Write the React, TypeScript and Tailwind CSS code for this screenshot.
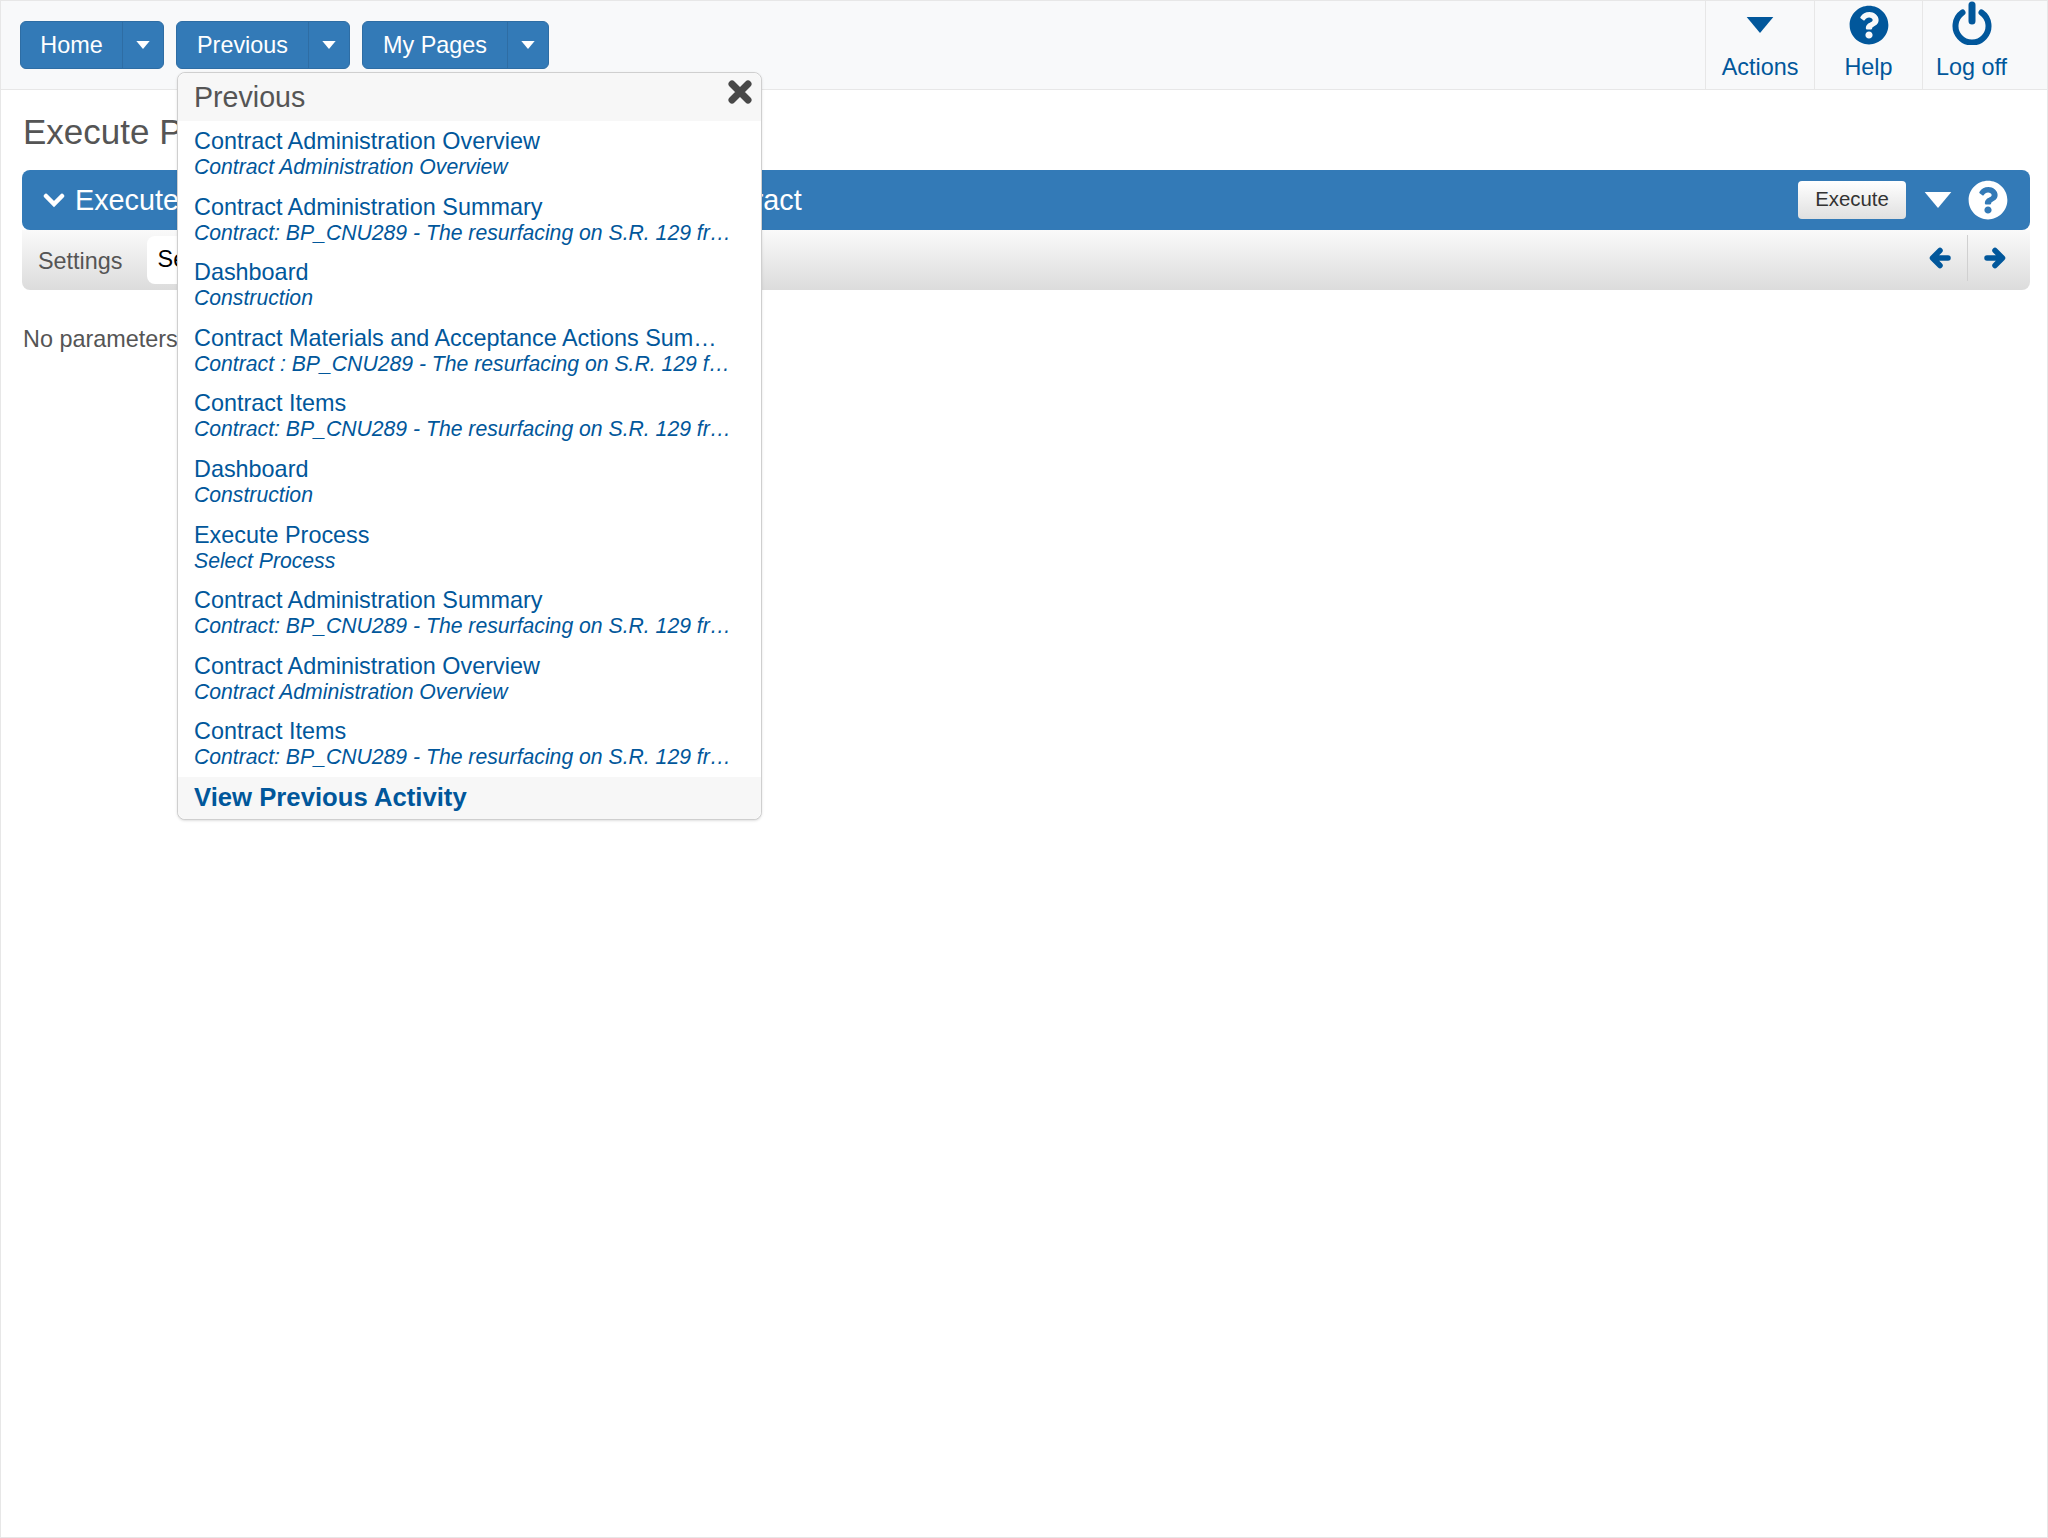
import { FaQuestionCircle } from 'react-icons/fa'

const previousItems = [
    { title: 'Contract Administration Overview', detail: 'Contract Administration Overview' },
    { title: 'Contract Administration Summary', detail: 'Contract: BP_CNU289 - The resurfacing on S.R. 129 from the Suwannee River' },
    { title: 'Dashboard', detail: 'Construction' },
    { title: 'Contract Materials and Acceptance Actions Summary', detail: 'Contract : BP_CNU289 - The resurfacing on S.R. 129 from the Suwannee River' },
    { title: 'Contract Items', detail: 'Contract: BP_CNU289 - The resurfacing on S.R. 129 from the Suwannee River' },
    { title: 'Dashboard', detail: 'Construction' },
    { title: 'Execute Process', detail: 'Select Process' },
    { title: 'Contract Administration Summary', detail: 'Contract: BP_CNU289 - The resurfacing on S.R. 129 from the Suwannee River' },
    { title: 'Contract Administration Overview', detail: 'Contract Administration Overview' },
    { title: 'Contract Items', detail: 'Contract: BP_CNU289 - The resurfacing on S.R. 129 from the Suwannee River' },
]

function Caret({ className }: { className: string }) {
    return (
        <svg className={className} viewBox="0 0 10 6" aria-hidden="true">
            <path d="M0 0H10L5 6Z" fill="currentColor" />
        </svg>
    )
}

function PowerIcon() {
    return (
        <svg className="w-[40px] h-[44px] text-[#01579b]" viewBox="0 0 40 44" aria-hidden="true">
            <path d="M10.5 11.5A16.5 16.5 0 1 0 29.5 11.5" fill="none" stroke="currentColor" strokeWidth="6" strokeLinecap="round" />
            <path d="M20 4V20" fill="none" stroke="currentColor" strokeWidth="7" strokeLinecap="round" />
        </svg>
    )
}

function CloseIcon() {
    return (
        <svg className="absolute right-[9px] top-[7px] w-[24px] h-[24px] text-[#484848]" viewBox="0 0 24 24" aria-hidden="true">
            <path d="M4 4L20 20M20 4L4 20" fill="none" stroke="currentColor" strokeWidth="7" strokeLinecap="round" />
        </svg>
    )
}

function ChevronIcon() {
    return (
        <svg className="w-[22px] h-[15px] mr-[10px]" viewBox="0 0 22 15" aria-hidden="true">
            <path d="M3 3L11 11L19 3" fill="none" stroke="currentColor" strokeWidth="4.5" strokeLinecap="round" />
        </svg>
    )
}

function ArrowLeft() {
    return (
        <svg className="w-[22px] h-[22px]" viewBox="0 0 22 22" aria-hidden="true">
            <path d="M19 11H4M11 3.5L3.5 11L11 18.5" fill="none" stroke="currentColor" strokeWidth="5.5" strokeLinecap="round" strokeLinejoin="round" />
        </svg>
    )
}

function ArrowRight() {
    return (
        <svg className="w-[22px] h-[22px]" viewBox="0 0 22 22" aria-hidden="true">
            <path d="M3 11H18M11 3.5L18.5 11L11 18.5" fill="none" stroke="currentColor" strokeWidth="5.5" strokeLinecap="round" strokeLinejoin="round" />
        </svg>
    )
}

function SplitButton({ label, labelWidth }: { label: string, labelWidth: string }) {
    return (
        <div className="flex h-[48px] rounded-[6px] bg-[#337ab7] border border-[#2e6da4] text-white text-[23.4px]">
            <span className={`flex items-center justify-center pt-[1px] border-r border-[#2e6da4] ${labelWidth}`}>{label}</span>
            <span className="flex items-center justify-center w-[40px]">
                <Caret className="w-[14px] h-[8px]" />
            </span>
        </div>
    )
}

function TopAction({ label, icon, width }: { label: string, icon: React.ReactNode, width: string }) {
    return (
        <div className={`flex flex-col items-center h-full border-l border-[#e7e7e7] text-[#01579b] text-[23.4px] ${width}`}>
            <div className="flex items-end justify-center h-[44px]">{icon}</div>
            <span className="mt-[10px] leading-[25px]">{label}</span>
        </div>
    )
}

function PreviousMenu() {
    return (
        <div className="absolute left-[176px] top-[72px] z-10 w-[585px] flex flex-col rounded-[8px] border border-[#cfcfcf] bg-white shadow-sm">
            <div className="relative h-[48px] shrink-0 rounded-t-[8px] bg-[#f7f7f7] pl-[16px] text-[28.6px] leading-[49px] text-[#555]">
                Previous
                <CloseIcon />
            </div>
            <ul className="h-[656px] pt-[7px] pl-[16px] pr-[26px]">
                {previousItems.map((item, index) => (
                    <li key={index} className="h-[65.6px] text-[#01579b]">
                        <div className="truncate text-[23.4px] leading-[27px]">{item.title}</div>
                        <div className="truncate text-[21.2px] leading-[24px] italic">{item.detail}</div>
                    </li>
                ))}
            </ul>
            <div className="h-[42px] shrink-0 rounded-b-[8px] bg-[#f7f7f7] pl-[16px] text-[25.7px] leading-[40px] font-bold text-[#01579b]">
                View Previous Activity
            </div>
        </div>
    )
}

export default function App() {
    return (
        <div className="relative min-h-[1538px] border-x border-b border-[#e7e7e7] bg-white font-['Liberation_Sans',Arial,sans-serif] text-[#555]">
            {/* Top navigation */}
            <div className="flex items-start justify-between h-[90px] pl-[19px] pr-[27px] bg-[#f8f9fa] border-y border-[#e7e7e7]">
                <div className="flex gap-x-[12px] pt-[20px]">
                    <SplitButton label="Home" labelWidth="w-[102px]" />
                    <SplitButton label="Previous" labelWidth="w-[132px]" />
                    <SplitButton label="My Pages" labelWidth="w-[145px]" />
                </div>
                <div className="flex h-full">
                    <TopAction label="Actions" width="w-[109px]" icon={<Caret className="w-[28px] h-[16px] mb-[12px] text-[#01579b]" />} />
                    <TopAction label="Help" width="w-[108px]" icon={<FaQuestionCircle className="w-[40px] h-[40px] text-[#01579b]" />} />
                    <TopAction label="Log off" width="w-[98px]" icon={<PowerIcon />} />
                </div>
            </div>

            <PreviousMenu />

            {/* Page content */}
            <div className="pl-[21px] pr-[17px]">
                <h1 className="pt-[20px] pl-[1px] h-[80px] text-[35px] leading-[44px] text-[#555]">Execute Process</h1>

                <div className="flex items-center justify-between h-[60px] rounded-[8px] bg-[#337ab7] pl-[21px] pr-[22px] text-white">
                    <div className="flex items-center">
                        <ChevronIcon />
                        <span className="text-[28.8px] pt-[1px]">Execute Process: Select a Process for Selected Contract</span>
                    </div>
                    <div className="flex items-center">
                        <button type="button" className="h-[38px] w-[108px] rounded-[4px] bg-gradient-to-b from-white to-[#e0e0e0] pb-[2px] text-[20.4px] text-[#333]">Execute</button>
                        <Caret className="w-[28px] h-[16px] ml-[18px] mr-[16px]" />
                        <FaQuestionCircle className="w-[40px] h-[40px]" />
                    </div>
                </div>

                <div className="flex items-center justify-between h-[60px] rounded-b-[8px] bg-gradient-to-b from-[#fafafa] to-[#dcdcdc] pl-[16px] pr-[24px]">
                    <div className="flex items-center">
                        <span className="text-[23.4px] mr-[24px] pt-[3px]">Settings</span>
                        <div className="h-[48px] w-[300px] rounded-[8px] bg-white pl-[11px] text-[23.4px] leading-[46px] text-black">Select</div>
                    </div>
                    <div className="flex items-center h-[46px] mb-[5px] text-[#01579b]">
                        <ArrowLeft />
                        <div className="h-full w-px mx-[16px] bg-[#d0d0d0]" />
                        <ArrowRight />
                    </div>
                </div>

                <p className="mt-[36px] pl-[1px] text-[23.4px] leading-[26px]">No parameters</p>
            </div>
        </div>
    )
}
